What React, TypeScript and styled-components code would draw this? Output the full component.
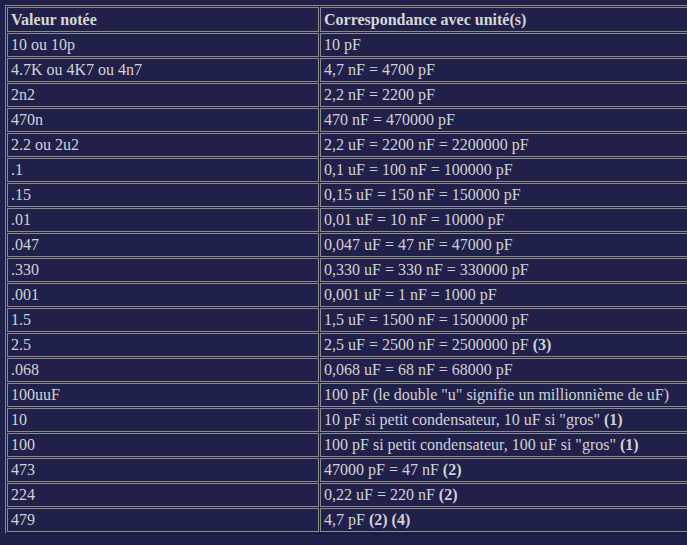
import React from "react";
import styled, { createGlobalStyle } from "styled-components";

const GlobalStyle = createGlobalStyle`
  html, body {
    margin: 0;
    padding: 0;
    overflow: hidden;
    background: #20214b;
  }
  body {
    font-family: "Liberation Serif", "Times New Roman", serif;
    color: #d2d2d2;
  }
`;

const Page = styled.div`
  padding: 5px 0 0 5px;
  width: 100vw;
  box-sizing: border-box;
  overflow: hidden;
`;

const Table = styled.table`
  border-collapse: separate;
  border-spacing: 1px;
  table-layout: fixed;
  width: 730px;
  border-top: 1px solid #8a8a8a;
  border-left: 1px solid #8a8a8a;
  border-right: 1px solid #16163a;
  border-bottom: 1px solid #16163a;
  font-size: 16px;
  line-height: 18px;
`;

const FirstCol = styled.col`
  width: 312px;
`;

const Head = styled.th`
  text-align: left;
  font-weight: bold;
  padding: 3px 3px 2px 3px;
  border: 1px solid #8a8a8a;
  white-space: nowrap;
  color: #d6d6d6;
`;

const Cell = styled.td`
  padding: 2px 3px;
  border: 1px solid #8a8a8a;
  white-space: nowrap;
`;

const Note = styled.b`
  font-weight: bold;
`;

type Row = { v: string; c: string; notes?: string };

const rows: Row[] = [
  { v: "10 ou 10p", c: "10 pF" },
  { v: "4.7K ou 4K7 ou 4n7", c: "4,7 nF = 4700 pF" },
  { v: "2n2", c: "2,2 nF = 2200 pF" },
  { v: "470n", c: "470 nF = 470000 pF" },
  { v: "2.2 ou 2u2", c: "2,2 uF = 2200 nF = 2200000 pF" },
  { v: ".1", c: "0,1 uF = 100 nF = 100000 pF" },
  { v: ".15", c: "0,15 uF = 150 nF = 150000 pF" },
  { v: ".01", c: "0,01 uF = 10 nF = 10000 pF" },
  { v: ".047", c: "0,047 uF = 47 nF = 47000 pF" },
  { v: ".330", c: "0,330 uF = 330 nF = 330000 pF" },
  { v: ".001", c: "0,001 uF = 1 nF = 1000 pF" },
  { v: "1.5", c: "1,5 uF = 1500 nF = 1500000 pF" },
  { v: "2.5", c: "2,5 uF = 2500 nF = 2500000 pF", notes: "(3)" },
  { v: ".068", c: "0,068 uF = 68 nF = 68000 pF" },
  { v: "100uuF", c: "100 pF (le double \"u\" signifie un millionnième de uF)" },
  { v: "10", c: "10 pF si petit condensateur, 10 uF si \"gros\"", notes: "(1)" },
  { v: "100", c: "100 pF si petit condensateur, 100 uF si \"gros\"", notes: "(1)" },
  { v: "473", c: "47000 pF = 47 nF", notes: "(2)" },
  { v: "224", c: "0,22 uF = 220 nF", notes: "(2)" },
  { v: "479", c: "4,7 pF", notes: "(2) (4)" },
];

export default function App() {
  return (
    <>
      <GlobalStyle />
      <Page>
        <Table>
          <colgroup>
            <FirstCol />
            <col />
          </colgroup>
          <thead>
            <tr>
              <Head>Valeur notée</Head>
              <Head>Correspondance avec unité(s)</Head>
            </tr>
          </thead>
          <tbody>
            {rows.map((r, i) => (
              <tr key={i}>
                <Cell>{r.v}</Cell>
                <Cell>
                  {r.c}
                  {r.notes ? (
                    <>
                      {" "}
                      <Note>{r.notes}</Note>
                    </>
                  ) : null}
                </Cell>
              </tr>
            ))}
          </tbody>
        </Table>
      </Page>
    </>
  );
}
